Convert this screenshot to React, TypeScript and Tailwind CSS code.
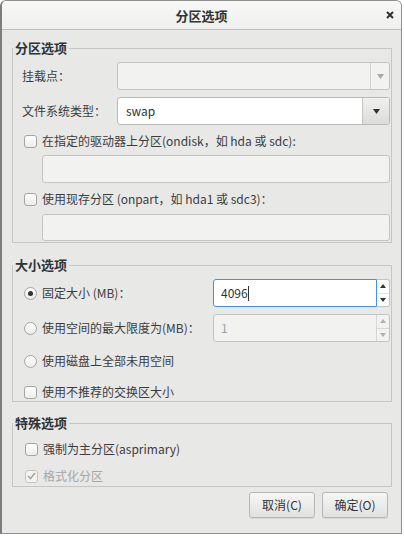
import React from "react";

const font = "font-['Noto_Sans_CJK_SC','Noto_Sans',sans-serif]";

function Arrow({ dir = "down", color = "#2e3436", w = 7 }: { dir?: "up" | "down"; color?: string; w?: number }) {
  const h = Math.round(w / 2) + 1;
  return (
    <svg width={w} height={h} viewBox={`0 0 ${w} ${h}`}>
      {dir === "down" ? (
        <polygon points={`0,0 ${w},0 ${w / 2},${h}`} fill={color} />
      ) : (
        <polygon points={`0,${h} ${w},${h} ${w / 2},0`} fill={color} />
      )}
    </svg>
  );
}

function Checkbox({ checked = false, disabled = false }: { checked?: boolean; disabled?: boolean }) {
  return (
    <div
      className={`w-[13px] h-[13px] rounded-[3px] border flex items-center justify-center shrink-0 ${
        disabled ? "border-[#c4c4c2] bg-[#f2f2f1]" : "border-[#a4a4a2] bg-gradient-to-b from-[#ffffff] to-[#ececeb]"
      }`}
    >
      {checked && (
        <svg width="9" height="8" viewBox="0 0 9 8">
          <polyline points="1,4 3.5,6.5 8,1" fill="none" stroke={disabled ? "#a6a6a6" : "#2e3436"} strokeWidth="1.6" />
        </svg>
      )}
    </div>
  );
}

function Radio({ checked = false }: { checked?: boolean }) {
  return (
    <div className="w-[13px] h-[13px] rounded-full border border-[#a4a4a2] bg-gradient-to-b from-[#ffffff] to-[#ececeb] flex items-center justify-center shrink-0">
      {checked && <div className="w-[5px] h-[5px] rounded-full bg-[#2e3436]" />}
    </div>
  );
}

function Entry({ h = 28, className = "" }: { h?: number; className?: string }) {
  return (
    <div
      className={`rounded-[3px] border border-[#c4c4c2] bg-[#f2f2f1] ${className}`}
      style={{ height: h }}
    />
  );
}

export default function App() {
  return (
    <div className={`w-[404px] h-[538px] bg-white ${font}`}>
      <div className="w-[402px] h-[534px] flex flex-col bg-[#e8e8e7] border-l-2 border-r border-b border-t border-[#8f8f8f] border-l-[#7d7d7d] rounded-t-[6px] overflow-hidden">
        {/* Title bar */}
        <div className="h-[29px] shrink-0 grid grid-cols-[1fr_auto_1fr] items-center bg-gradient-to-b from-[#f8f8f7] to-[#efefee] border-b border-[#bdbdbb]">
          <div />
          <div className="text-[13px] font-bold text-[#2e3436] leading-none">分区选项</div>
          <div className="flex justify-end pr-[7px]">
            <svg width="8" height="8" viewBox="0 0 8 8">
              <path d="M1 1 L7 7 M7 1 L1 7" stroke="#2e3436" strokeWidth="2" />
            </svg>
          </div>
        </div>

        <div className="flex flex-col pl-[10px] pr-[9px]">
          {/* Section 1 */}
          <fieldset className="mt-[9px] border border-[#c6c6c4] px-0 pb-[1px] pt-[5px] min-w-0">
            <legend className="px-[2px] text-[13px] font-bold text-[#2e3436] leading-[18px]">分区选项</legend>
            <div className="flex flex-col pr-[1px]">
              <div className="flex items-center h-[28px]">
                <div className="w-[104px] pl-[9px] text-[12px] text-[#3a3d3e]">挂载点：</div>
                <div className="flex-1 h-[28px] flex rounded-[3px] border border-[#c4c4c2] bg-[#f2f2f1]">
                  <div className="flex-1" />
                  <div className="w-[19px] border-l border-[#d2d2d0] flex items-center justify-center">
                    <Arrow color="#a8a8a8" />
                  </div>
                </div>
              </div>
              <div className="flex items-center h-[28px] mt-[7px]">
                <div className="w-[104px] pl-[9px] text-[12px] text-[#3a3d3e]">文件系统类型：</div>
                <div className="flex-1 h-[28px] flex rounded-[3px] border border-[#b8b8b6] bg-white overflow-hidden">
                  <div className="flex-1 flex items-center pl-[8px] text-[12px] text-[#2e3436]">swap</div>
                  <div className="w-[27px] border-l border-[#c4c4c2] bg-gradient-to-b from-[#f0f0ef] to-[#dcdcda] flex items-center justify-center">
                    <Arrow />
                  </div>
                </div>
              </div>
              <div className="flex items-center gap-[5px] pl-[11px] mt-[9px] h-[14px]">
                <Checkbox />
                <span className="text-[12px] text-[#3a3d3e] whitespace-nowrap">在指定的驱动器上分区(ondisk，如 hda 或 sdc):</span>
              </div>
              <Entry className="ml-[29px] mt-[7px]" h={28} />
              <div className="flex items-center gap-[5px] pl-[11px] mt-[9px] h-[14px]">
                <Checkbox />
                <span className="text-[12px] text-[#3a3d3e] whitespace-nowrap">使用现存分区 (onpart，如 hda1 或 sdc3)：</span>
              </div>
              <Entry className="ml-[29px] mt-[8px]" h={27} />
            </div>
          </fieldset>

          {/* Section 2 */}
          <fieldset className="mt-[13px] border border-[#c6c6c4] px-0 pb-[2px] pt-[5px] min-w-0">
            <legend className="px-[2px] text-[13px] font-bold text-[#2e3436] leading-[18px]">大小选项</legend>
            <div className="flex flex-col pr-[1px]">
              <div className="flex items-center h-[28px] pl-[11px]">
                <div className="flex-1 flex items-center gap-[5px]">
                  <Radio checked />
                  <span className="text-[12px] text-[#3a3d3e]">固定大小 (MB)：</span>
                </div>
                <div className="w-[177px] h-[28px] flex">
                  <div className="flex-1 rounded-l-[3px] border border-[#4a90d9] bg-white flex items-center pl-[7px] text-[12px] text-[#2e3436]">
                    4096<span className="inline-block w-[1px] h-[15px] bg-[#2e3436]" />
                  </div>
                  <div className="w-[13px] flex flex-col border border-l-0 border-[#c4c4c2] rounded-r-[3px] bg-white">
                    <div className="flex-1 flex items-center justify-center border-b border-[#e2e2e0]">
                      <Arrow dir="up" w={6} />
                    </div>
                    <div className="flex-1 flex items-center justify-center">
                      <Arrow dir="down" w={6} />
                    </div>
                  </div>
                </div>
              </div>
              <div className="flex items-center h-[28px] mt-[7px] pl-[11px]">
                <div className="flex-1 flex items-center gap-[5px]">
                  <Radio />
                  <span className="text-[12px] text-[#3a3d3e]">使用空间的最大限度为(MB)：</span>
                </div>
                <div className="w-[177px] h-[28px] flex rounded-[3px] border border-[#c4c4c2] bg-[#f2f2f1]">
                  <div className="flex-1 flex items-center pl-[7px] text-[12px] text-[#a0a0a0]">1</div>
                  <div className="w-[13px] flex flex-col border-l border-[#d6d6d4]">
                    <div className="flex-1 flex items-center justify-center border-b border-[#d6d6d4]">
                      <Arrow dir="up" w={6} color="#b0b0b0" />
                    </div>
                    <div className="flex-1 flex items-center justify-center">
                      <Arrow dir="down" w={6} color="#b0b0b0" />
                    </div>
                  </div>
                </div>
              </div>
              <div className="flex items-center gap-[5px] pl-[11px] mt-[12px] h-[14px]">
                <Radio />
                <span className="text-[12px] text-[#3a3d3e]">使用磁盘上全部未用空间</span>
              </div>
              <div className="flex items-center gap-[5px] pl-[11px] mt-[17px] h-[14px]">
                <Checkbox />
                <span className="text-[12px] text-[#3a3d3e]">使用不推荐的交换区大小</span>
              </div>
            </div>
          </fieldset>

          {/* Section 3 */}
          <fieldset className="mt-[12px] border border-[#c6c6c4] px-0 pb-[3px] pt-0 min-w-0">
            <legend className="px-[2px] text-[13px] font-bold text-[#2e3436] leading-[18px]">特殊选项</legend>
            <div className="flex flex-col">
              <div className="flex items-center gap-[5px] pl-[12px] mt-[10px] h-[14px]">
                <Checkbox />
                <span className="text-[12px] text-[#3a3d3e]">强制为主分区(asprimary)</span>
              </div>
              <div className="flex items-center gap-[5px] pl-[12px] mt-[13px] h-[14px]">
                <Checkbox checked disabled />
                <span className="text-[12px] text-[#a6a6a6]">格式化分区</span>
              </div>
            </div>
          </fieldset>

          {/* Buttons */}
          <div className="flex justify-end gap-[7px] mt-[5px] pr-[4px]">
            <button className="w-[66px] h-[26px] rounded-[3px] border border-[#b6b6b4] bg-gradient-to-b from-[#f6f6f5] to-[#e1e1df] shadow-[0_1px_0_rgba(0,0,0,0.08)] text-[12px] text-[#2e3436]">
              取消(C)
            </button>
            <button className="w-[66px] h-[26px] rounded-[3px] border border-[#b6b6b4] bg-gradient-to-b from-[#f6f6f5] to-[#e1e1df] shadow-[0_1px_0_rgba(0,0,0,0.08)] text-[12px] text-[#2e3436]">
              确定(O)
            </button>
          </div>
        </div>
      </div>
    </div>
  );
}
